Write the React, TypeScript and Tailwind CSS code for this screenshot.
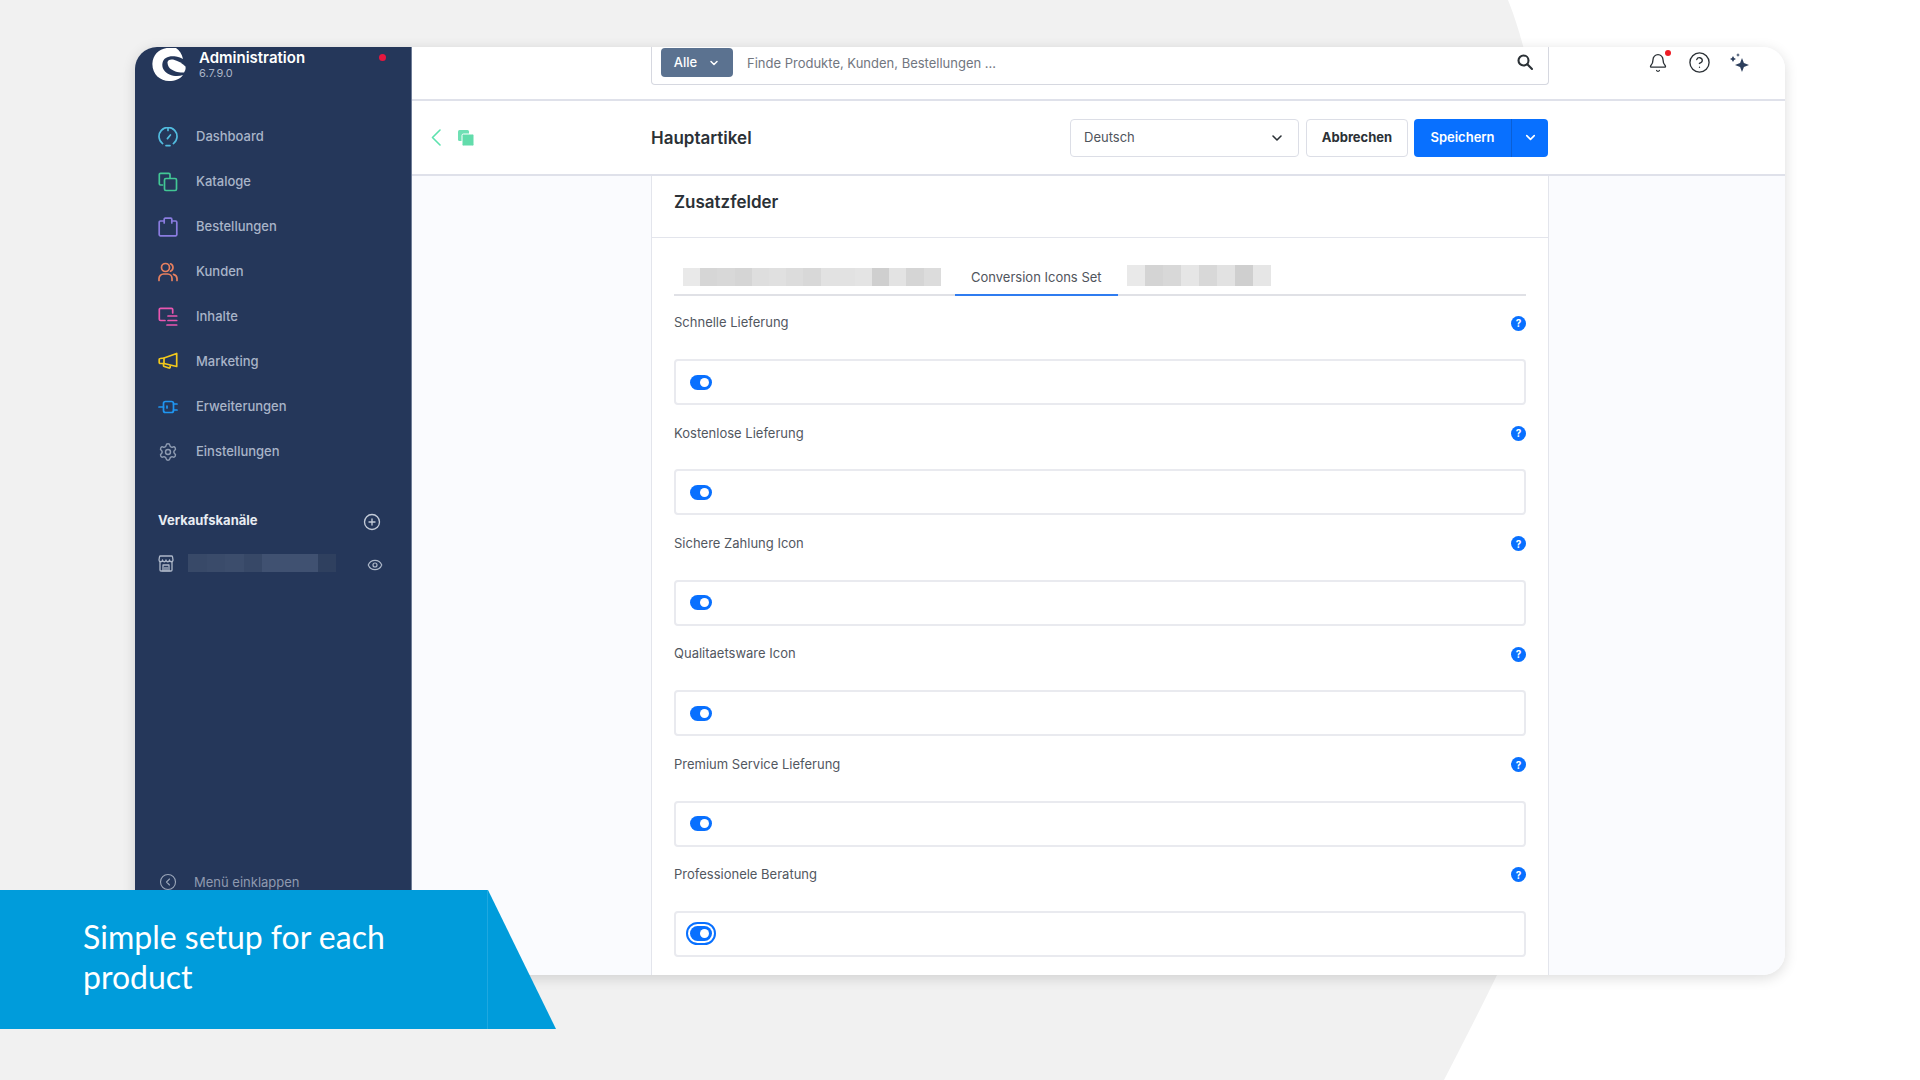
import { ChevronDown, Bell, CircleHelp, Eye, CirclePlus, CircleChevronLeft, Settings } from 'lucide-react';

const navItems = [
    { label: 'Dashboard', icon: 'dashboard' },
    { label: 'Kataloge', icon: 'catalog' },
    { label: 'Bestellungen', icon: 'orders' },
    { label: 'Kunden', icon: 'customers' },
    { label: 'Inhalte', icon: 'content' },
    { label: 'Marketing', icon: 'marketing' },
    { label: 'Erweiterungen', icon: 'extensions' },
    { label: 'Einstellungen', icon: 'settings' },
];

const fields = [
    'Schnelle Lieferung',
    'Kostenlose Lieferung',
    'Sichere Zahlung Icon',
    'Qualitaetsware Icon',
    'Premium Service Lieferung',
    'Professionele Beratung',
];

const tabMosaicA = ['#e9e9e9', '#d6d6d6', '#d8d8d8', '#d5d5d5', '#dedede', '#e0e0e0', '#dcdcdc', '#d8d8d8', '#e2e2e2', '#e2e2e2', '#e4e4e4', '#cfcfcf', '#e3e3e3', '#d5d5d5', '#dcdcdc'];
const tabMosaicB = ['#e9e9e9', '#d4d4d4', '#d8d8d8', '#e6e6e6', '#d8d8d8', '#e2e2e2', '#cfcfcf', '#e6e6e6'];
const sidebarMosaic = ['#384968', '#3a4b6a', '#3c4d6c', '#374867', '#405171', '#405171', '#405171', '#2f405f'];

function NavIcon({ name }: { name: string }) {
    const common = { width: 20, height: 20, viewBox: '0 0 20 20', fill: 'none', strokeWidth: 1.7, strokeLinecap: 'round' as const, strokeLinejoin: 'round' as const };
    switch (name) {
        case 'dashboard':
            return (
                <svg {...common} stroke="#52bcdf">
                    <path d="M4.6 16.6A9 9 0 1 1 15.4 16.6" />
                    <path d="M8 18.6h4" />
                    <path d="M9.4 11.6l3-3.6" />
                    <path d="M10 1.4v2" />
                </svg>
            );
        case 'catalog':
            return (
                <svg {...common} stroke="#42c795">
                    <path d="M4.5 13H2.5a1.2 1.2 0 0 1-1.2-1.2V2.5a1.2 1.2 0 0 1 1.2-1.2h8.3a1.2 1.2 0 0 1 1.2 1.2v3.3" />
                    <rect x="6.5" y="6.5" width="12" height="12" rx="1.4" />
                </svg>
            );
        case 'orders':
            return (
                <svg {...common} stroke="#8a7ce0">
                    <path d="M6.2 4H2.4a1.2 1.2 0 0 0-1.2 1.2v12.4a1.2 1.2 0 0 0 1.2 1.2h15.2a1.2 1.2 0 0 0 1.2-1.2V5.2a1.2 1.2 0 0 0-1.2-1.2h-3.8" />
                    <path d="M6.2 6V2.2a1 1 0 0 1 1-1h5.6a1 1 0 0 1 1 1V6" />
                </svg>
            );
        case 'customers':
            return (
                <svg {...common} stroke="#e8805f">
                    <circle cx="7.5" cy="5.5" r="4" />
                    <path d="M12.5 1.8a4 4 0 0 1 0 7.4" />
                    <path d="M1 18.5v-2a4.5 4.5 0 0 1 4.5-4.5h4a4.5 4.5 0 0 1 4.5 4.5v2" />
                    <path d="M15.5 12.3a4.5 4.5 0 0 1 3.5 4.2v2" />
                </svg>
            );
        case 'content':
            return (
                <svg {...common} stroke="#ea57b0">
                    <path d="M7 13.5H2.6a1.3 1.3 0 0 1-1.3-1.3V2.6a1.3 1.3 0 0 1 1.3-1.3h10.8a1.3 1.3 0 0 1 1.3 1.3V6" />
                    <path d="M10 9h8.7" />
                    <path d="M10 13.5h8.7" />
                    <path d="M9 18h9.7" />
                </svg>
            );
        case 'marketing':
            return (
                <svg {...common} stroke="#f2c81c">
                    <path d="M18.7 1.5v13L6 11.5H2.2a1 1 0 0 1-1-1V7.5a1 1 0 0 1 1-1L6 6z" />
                    <path d="M5.5 11.5v2a1 1 0 0 0 .8 1l4.7 1.500a1 1 0 0 0 1.2-1v-1" />
                    <path d="M6 6v5.5" />
                </svg>
            );
        case 'extensions':
            return (
                <svg {...common} stroke="#1f96f2">
                    <rect x="5.5" y="4.5" width="10" height="11" rx="2" />
                    <path d="M1 10h4.5" />
                    <path d="M15.5 7h3.5" />
                    <path d="M15.5 13h3.5" />
                    <path d="M9 9v2" />
                </svg>
            );
        default:
            return <Settings size={20} strokeWidth={1.7} className="text-[#8f9cb2]" />;
    }
}

function Mosaic({ cells, cellClass }: { cells: string[]; cellClass: string }) {
    return (
        <div className="flex">
            {cells.map((c, i) => (
                <div key={i} className={cellClass} style={{ backgroundColor: c }} />
            ))}
        </div>
    );
}

function HelpDot() {
    return (
        <div className="flex h-[15px] w-[15px] items-center justify-center rounded-full bg-[#0870ff] text-[10px] leading-none font-bold text-white">
            ?
        </div>
    );
}

function Toggle({ focused }: { focused?: boolean }) {
    return (
        <div className={focused ? 'rounded-full border-[2px] border-[#0870ff] p-[2px]' : ''}>
            <div className="flex h-[15px] w-[22px] items-center justify-end rounded-full bg-[#0870ff] pr-[3px]">
                <div className="h-[9px] w-[9px] rounded-full bg-white" />
            </div>
        </div>
    );
}

function Sidebar() {
    return (
        <aside className="flex w-[277px] shrink-0 flex-col border-r border-[#6f7d97] bg-[#25375a]">
            <div className="relative h-[41px] shrink-0 pl-[17px]">
                <div className="flex items-start">
                    {/* shopware logo, top is cut off by the window edge */}
                    <svg width="34" height="33" viewBox="0 0 34 33" className="mt-px">
                        <path
                            fill="#ffffff"
                            d="M24 0C11 -2 1 4 0.4 15.5C0 26 8 33 17 33C23 33 28 31 31 27C27 28.5 22 28.5 17.5 26.5C12.5 24 9.5 20 10.5 15C11.5 9.5 17 7.5 24 8.5C27 9 29 9.8 31 11C30 6 27.5 2.5 24 0Z"
                        />
                        <path
                            fill="#ffffff"
                            d="M15.5 14.5C15.5 11.8 19 11 22.5 12C26 13 30 15 33.5 18.5C34 21 33 23 32 24.5C27 25 21 23 18 20.5C16.5 19 15.5 16.5 15.5 14.5Z"
                        />
                    </svg>
                    <div className="ml-[13px] mt-[2px]">
                        <div className="text-[15px] leading-[18px] font-semibold text-white">Administration</div>
                        <div className="mt-[-1px] text-[11px] leading-[14px] text-[#aab5c7]">6.7.9.0</div>
                    </div>
                </div>
                <div className="absolute right-[25px] top-[7px] h-[7px] w-[7px] rounded-full bg-[#e5173f]" />
            </div>
            <nav className="mt-[26px] flex flex-col pl-[23px]">
                {navItems.map((item) => (
                    <div key={item.label} className="flex h-[45px] items-center">
                        <NavIcon name={item.icon} />
                        <span className="ml-[18px] text-[13px] font-medium text-[#a9b4c8]">{item.label}</span>
                    </div>
                ))}
            </nav>
            <div className="mt-[37px] flex items-center justify-between pl-[23px] pr-[30px]">
                <span className="text-[13px] font-bold text-[#e8ecf2]">Verkaufskanäle</span>
                <CirclePlus size={18} strokeWidth={1.8} className="mt-[2px] text-[#c3cbd8]" />
            </div>
            <div className="mt-[21px] flex items-center pl-[23px]">
                <svg width="16" height="17" viewBox="0 0 16 17" fill="none" stroke="#aeb8c9" strokeWidth="1.3" strokeLinecap="round" strokeLinejoin="round" className="mt-px">
                    <path d="M2 6.5V15a1 1 0 0 0 1 1h10a1 1 0 0 0 1-1V6.5" />
                    <path d="M2.5 1h11a1 1 0 0 1 1 .8L15 5a1.750 1.750 0 0 1-3.5 0a1.750 1.750 0 0 1-3.5 0a1.750 1.750 0 0 1-3.5 0a1.750 1.750 0 0 1-3.5 0l.5-3.2a1 1 0 0 1 1-.8z" />
                    <path d="M5 16V10h6v6" />
                    <path d="M7 16v-3.5" />
                    <path d="M9 16v-3.5" />
                </svg>
                <div className="ml-[14px]">
                    <Mosaic cells={sidebarMosaic} cellClass="h-[18px] w-[18.5px]" />
                </div>
                <Eye size={16} strokeWidth={1.8} className="ml-[31px] mt-[5px] text-[#aeb8c9]" />
            </div>
            <div className="mt-auto mb-[83px] flex items-center pl-[24px]">
                <CircleChevronLeft size={18} strokeWidth={1.5} className="text-[#9aa5b8]" />
                <span className="ml-[17px] text-[13px] text-[#8f9ab0]">Menü einklappen</span>
            </div>
        </aside>
    );
}

function Main() {
    return (
        <div className="flex min-w-0 flex-1 flex-col bg-[#fafbfe]">
            <header className="flex h-[54px] shrink-0 border-b-2 border-[#dfe1ea] bg-white">
                <div className="ml-[239px] flex h-[38px] w-[898px] items-start rounded-b border border-t-0 border-[#d6d8e0] pl-[9px] pr-[14px] pt-[1px]">
                    <div className="flex h-[29px] w-[72px] items-center justify-center gap-[11px] rounded bg-[#5b7290] text-[13px] font-medium text-white">
                        Alle
                        <ChevronDown size={12} strokeWidth={3} />
                    </div>
                    <span className="ml-[14px] mt-[6px] text-[13px] text-[#71767f]">Finde Produkte, Kunden, Bestellungen ...</span>
                    <svg width="18" height="18" viewBox="0 0 18 18" fill="none" stroke="#2b3136" strokeWidth="2.1" strokeLinecap="round" className="ml-auto mt-[5px]">
                        <circle cx="7.5" cy="7.5" r="5" />
                        <path d="M11.3 11.3L16 16" />
                    </svg>
                </div>
                <div className="ml-[99px] mt-[3px] flex h-[24px] items-center gap-[20px]">
                    <div className="relative mt-[2px]">
                        <Bell size={20} strokeWidth={1.6} className="text-[#2b3136]" />
                        <div className="absolute right-[-3px] top-[-3px] h-[6px] w-[6px] rounded-full bg-[#ee1c25]" />
                    </div>
                    <CircleHelp size={23} strokeWidth={1.4} className="text-[#2b3136]" />
                    <svg width="21" height="21" viewBox="0 0 21 21" fill="#2d3f5d" className="ml-[-3px]">
                        <path d="M14 6L15.9 11.100L21 13L15.9 14.900L14 20L12.100 14.900L7 13L12.100 11.100Z" />
                        <path d="M5 4L6.100 5.900L8 7L6.100 8.100L5 10L3.900 8.100L2 7L3.900 5.900Z" />
                        <path d="M10 1L10.600 2.400L12 3L10.600 3.600L10 5L9.400 3.600L8 3L9.400 2.400Z" />
                    </svg>
                </div>
            </header>
            <div className="flex h-[75px] shrink-0 items-center border-b-2 border-[#dfe1ea] bg-white">
                <div className="flex w-[239px] items-center pl-[19px]">
                    <svg width="10" height="17" viewBox="0 0 10 17" fill="none" stroke="#5de2ae" strokeWidth="1.6" strokeLinecap="round" strokeLinejoin="round">
                        <path d="M9 1L1.5 8.5L9 16" />
                    </svg>
                    <svg width="16" height="16" viewBox="0 0 16 16" className="ml-[17px]">
                        <rect x="0" y="0" width="11" height="11" rx="1.5" fill="#6fe0b4" />
                        <rect x="4" y="4" width="12" height="12" rx="1.5" fill="#62dcab" stroke="#ffffff" strokeWidth="1" />
                    </svg>
                </div>
                <div className="w-[419px] pt-[2px]">
                    <span className="text-[17px] font-semibold text-[#2b3136]">Hauptartikel</span>
                </div>
                <div className="flex h-[38px] w-[229px] items-center justify-between rounded border border-[#dcdee6] pl-[13px] pr-[13px] text-[13px] text-[#4f545c]">
                    Deutsch
                    <ChevronDown size={16} strokeWidth={2.4} className="text-[#2b3136]" />
                </div>
                <div className="ml-[7px] flex h-[38px] w-[102px] items-center justify-center rounded border border-[#dcdee6] text-[13px] font-bold text-[#2b3136]">
                    Abbrechen
                </div>
                <div className="ml-[6px] flex h-[38px] w-[134px] overflow-hidden rounded bg-[#0870ff] text-[13px] font-semibold text-white">
                    <div className="flex w-[98px] items-center justify-center border-r border-[#0a5fd6]">Speichern</div>
                    <div className="flex flex-1 items-center justify-center">
                        <ChevronDown size={15} strokeWidth={2.6} />
                    </div>
                </div>
            </div>
            <div className="flex min-h-0 flex-1">
                <section className="ml-[239px] w-[898px] border-x border-[#e3e5ec] bg-white">
                    <div className="flex h-[62px] items-center border-b border-[#e3e5ec] pl-[22px] pb-[8px]">
                        <h2 className="text-[17px] font-semibold text-[#2b3136]">Zusatzfelder</h2>
                    </div>
                    <div className="px-[22px]">
                        <div className="flex h-[58px] items-end border-b-2 border-[#e0e1e6]">
                            <div className="mb-[8px] ml-[9px]">
                                <Mosaic cells={tabMosaicA} cellClass="h-[18px] w-[17.2px]" />
                            </div>
                            <div className="mb-[-2px] ml-[14px] flex h-[38px] w-[163px] items-center justify-center border-b-2 border-[#2f7cf0] pt-[4px] text-[13px] text-[#4f545c]">
                                Conversion Icons Set
                            </div>
                            <div className="mb-[8px] ml-[9px]">
                                <Mosaic cells={tabMosaicB} cellClass="h-[21px] w-[18px]" />
                            </div>
                        </div>
                        {fields.map((label, i) => (
                            <div key={label} className="h-[110.4px] pt-[17px]">
                                <div className="flex h-[20px] items-center justify-between">
                                    <span className="text-[13px] font-normal text-[#52575f]">{label}</span>
                                    <HelpDot />
                                </div>
                                <div className={`mt-[26px] flex h-[46px] items-center rounded border-2 border-[#e9eaef] bg-white ${i === 5 ? 'pl-[10px]' : 'pl-[14px]'}`}>
                                    <Toggle focused={i === 5} />
                                </div>
                            </div>
                        ))}
                    </div>
                </section>
            </div>
        </div>
    );
}

export default function App() {
    return (
        <div className="relative h-[1080px] w-[1920px] overflow-hidden bg-white font-['Inter',sans-serif]">
            {/* grey backdrop shape behind the window */}
            <svg className="absolute inset-0" width="1920" height="1080" viewBox="0 0 1920 1080">
                <path d="M0 0H1508C1560 130 1600 500 1497 975C1480 1010 1462 1045 1444 1080H0Z" fill="#f1f1f1" />
            </svg>
            <div className="absolute left-[135px] top-[47px] flex h-[928px] w-[1650px] overflow-hidden rounded-[22px] bg-white shadow-[0_3px_14px_rgba(0,0,0,0.14)]">
                <Sidebar />
                <Main />
            </div>
            {/* blue caption banner over the window */}
            <div className="absolute bottom-[51px] left-0 flex h-[139px] w-[488px] items-center border-r border-[#1fa8e0] bg-[#009cdb] pb-[6px] pl-[83px] pr-[60px]">
                <p className="font-['Lato',sans-serif] text-[32px] leading-[40px] font-normal text-white">Simple setup for each product</p>
            </div>
            <svg className="absolute bottom-[51px] left-[488px]" width="68" height="139" viewBox="0 0 68 139">
                <path d="M0 0L68 139H0Z" fill="#009cdb" />
            </svg>
        </div>
    );
}
